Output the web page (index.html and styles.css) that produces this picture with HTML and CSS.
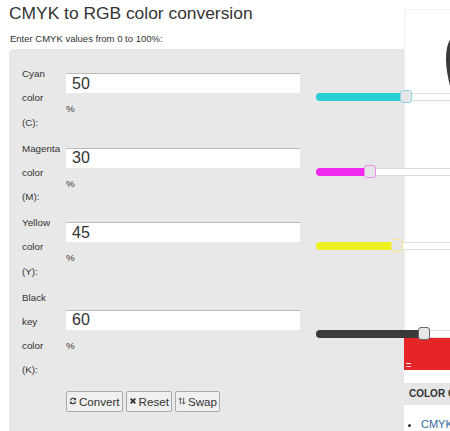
FILE: index.html
```html
<!DOCTYPE html>
<html lang="en">
<head>
<meta charset="utf-8">
<title>CMYK to RGB color conversion</title>
<link rel="stylesheet" href="styles.css">
</head>
<body>
<div class="page">
  <main class="main">
    <h1 class="title">CMYK to RGB color conversion</h1>
    <p class="intro">Enter CMYK values from 0 to 100%:</p>
    <form class="panel">
      <div class="row">
        <label class="label">Cyan<br>color<br>(C):</label>
        <div class="field"><input class="input" type="text" value="50"><span class="unit">%</span></div>
        <div class="slider cyan"><span class="fill" style="width:50%"></span><span class="thumb" style="left:50%"></span></div>
      </div>
      <div class="row">
        <label class="label">Magenta<br>color<br>(M):</label>
        <div class="field"><input class="input" type="text" value="30"><span class="unit">%</span></div>
        <div class="slider magenta"><span class="fill" style="width:30%"></span><span class="thumb" style="left:30%"></span></div>
      </div>
      <div class="row">
        <label class="label">Yellow<br>color<br>(Y):</label>
        <div class="field"><input class="input" type="text" value="45"><span class="unit">%</span></div>
        <div class="slider yellow"><span class="fill" style="width:45%"></span><span class="thumb" style="left:45%"></span></div>
      </div>
      <div class="row row-key">
        <label class="label">Black<br>key<br>color<br>(K):</label>
        <div class="field"><input class="input" type="text" value="60"><span class="unit">%</span></div>
        <div class="slider black"><span class="fill" style="width:60%"></span><span class="thumb" style="left:60%"></span></div>
      </div>
      <div class="buttons">
        <button class="btn" type="button"><svg class="icon" viewBox="0 0 12 12"><path d="M2 5.2A4.1 4.1 0 0 1 9.2 3.4M10 6.8A4.1 4.1 0 0 1 2.8 8.6" fill="none" stroke="#333" stroke-width="1.7"/><path d="M10.6 1v3.8H6.8zM1.400 11V7.200H5.200z" fill="#333"/></svg>Convert</button>
        <button class="btn" type="button"><svg class="icon" viewBox="0 0 12 12"><path d="M2.500 2.500l7 7M9.500 2.500l-7 7" fill="none" stroke="#333" stroke-width="2.800"/></svg>Reset</button>
        <button class="btn" type="button"><svg class="icon" viewBox="0 0 12 12"><path d="M3.500 11V2M1.300 4L3.500 1.200 5.700 4M8.500 1v9M6.300 8L8.500 10.800 10.700 8" fill="none" stroke="#333" stroke-width="1.200"/></svg>Swap</button>
      </div>
    </form>
  </main>
  <aside class="side">
    <div class="ad">
      <svg class="ad-shape" viewBox="0 0 4 46"><path d="M4 0C1 4 0 12 0 20s2 18 4 26z" fill="#3a3a3a"/></svg>
    </div>
    <div class="banner"><span class="banner-mark"></span></div>
    <div class="side-title">COLOR CONVERSION</div>
    <ul class="side-list"><li><a class="side-link" href="#">CMYK to RGB</a></li></ul>
  </aside>
</div>
</body>
</html>
```
FILE: styles.css
```css
html, body {
  margin: 0;
  height: 431px;
  overflow: hidden;
  background: #fff;
}
body {
  font-family: "Liberation Sans", Arial, sans-serif;
  color: #333;
}
.page {
  display: flex;
  width: 600px;
  height: 431px;
}
.main {
  width: 395px;
  margin-left: 9px;
  flex: none;
}
.title {
  margin: 0;
  padding-top: 3px;
  font-size: 17.400px;
  font-weight: 400;
  line-height: 20px;
  color: #333;
}
.intro {
  margin: 10px 0 0 1px;
  font-size: 9.500px;
  line-height: 11px;
  color: #333;
}
.panel {
  margin-top: 5px;
  height: 382px;
  padding: 13px 0 0 13px;
  box-sizing: border-box;
  background: #e8e8e8;
  border-radius: 5px 0 0 0;
  position: relative;
  z-index: 1;
}
.row {
  display: flex;
  height: 74.500px;
}
.row-key {
  height: 104px;
}
.label {
  width: 44px;
  flex: none;
  font-size: 9.800px;
  line-height: 24.300px;
  color: #333;
}
.field {
  width: 234px;
  flex: none;
  padding-top: 11px;
}
.row-key .field {
  padding-top: 24px;
}
.input {
  display: block;
  width: 100%;
  height: 20px;
  box-sizing: border-box;
  border: 0;
  border-top: 1px solid #bbb;
  padding: 0 0 0 6px;
  font: 16px "Liberation Sans", Arial, sans-serif;
  color: #333;
  background: #fff;
  outline: 0;
}
.unit {
  display: block;
  margin-top: 10px;
  font-size: 9.800px;
  line-height: 12px;
  color: #333;
}
.slider {
  position: relative;
  flex: none;
  width: 180px;
  height: 8px;
  margin: 31px 0 0 16px;
  box-sizing: border-box;
  background: #fff;
  border: 1px solid #ddd;
  border-radius: 4px;
}
.row-key .slider {
  margin-top: 44px;
}
.fill {
  position: absolute;
  left: -1px;
  top: -1px;
  bottom: -1px;
  border-radius: 4px 0 0 4px;
}
.thumb {
  position: absolute;
  top: -4px;
  width: 12px;
  height: 13px;
  margin-left: -6px;
  box-sizing: border-box;
  background: #e6e6e6;
  border: 1px solid #888;
  border-radius: 3px;
}
.cyan .fill { background: #29cfd2; }
.cyan .thumb { border-color: #8fd6e6; }
.magenta .fill { background: #f128ee; }
.magenta .thumb { border-color: #e88fe6; }
.yellow .fill { background: #eef021; }
.yellow .thumb { border-color: #f5e88a; }
.black .fill { background: #3a3a3a; }
.black .thumb { border-color: #666; }
.buttons {
  display: flex;
  gap: 3px;
  margin: 0 0 0 44px;
  padding-top: 1px;
}
.btn {
  display: flex;
  align-items: center;
  gap: 2px;
  height: 21px;
  padding: 0 2px;
  box-sizing: border-box;
  background: #f0f0f0;
  border: 1px solid #aaa;
  border-radius: 2px;
  font: 11.600px "Liberation Sans", Arial, sans-serif;
  color: #333;
}
.icon {
  width: 8px;
  height: 8px;
}
.side {
  width: 180px;
  flex: none;
}
.ad {
  margin-top: 9px;
  height: 328px;
  background: #fff;
  border: 1px solid #f0f0f0;
  border-right: 0;
  box-sizing: border-box;
  padding-top: 30px;
}
.ad-shape {
  display: block;
  width: 4px;
  height: 46px;
  margin-left: 41px;
}
.banner {
  position: relative;
  height: 33px;
  background: #e52528;
}
.banner-mark {
  position: absolute;
  left: 2px;
  bottom: 3px;
  width: 5px;
  height: 1px;
  border-top: 1px solid #fff;
  border-bottom: 1px solid #fbd;
  padding-bottom: 1px;
}
.side-title {
  margin: 13px 0 0 -1px;
  height: 22px;
  padding-left: 6px;
  background: #e6e6e6;
  font-size: 10px;
  font-weight: 700;
  line-height: 21px;
  color: #333;
  white-space: nowrap;
}
.side-list {
  margin: 12px 0 0;
  padding: 0 0 0 17px;
  font-size: 11px;
  line-height: 14px;
  white-space: nowrap;
}
.side-link {
  color: #36699b;
  text-decoration: none;
}
```
